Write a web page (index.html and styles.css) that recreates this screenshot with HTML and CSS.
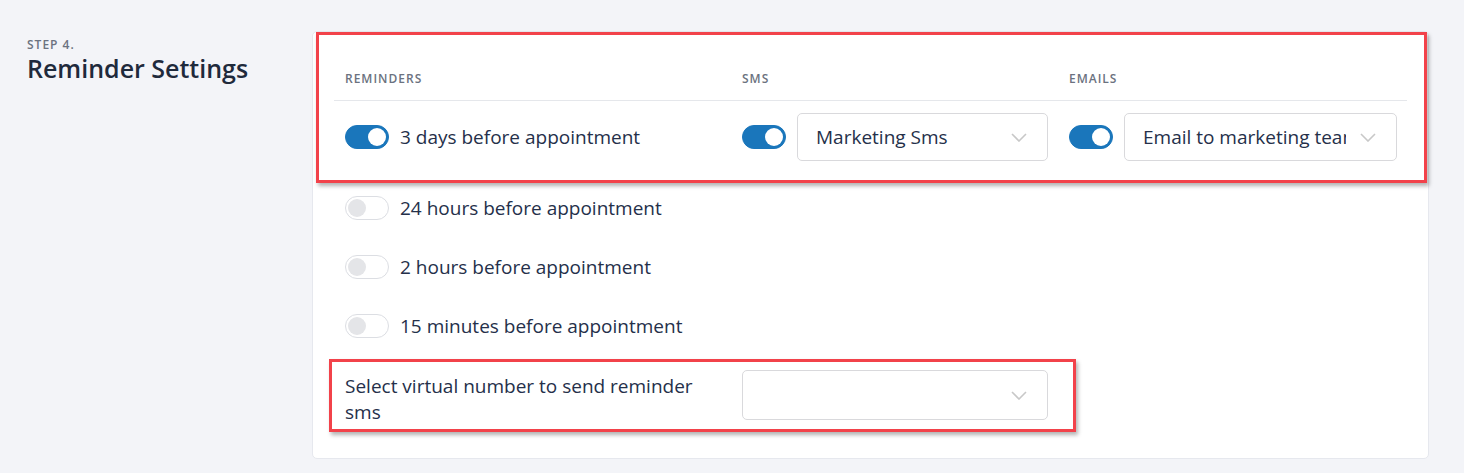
FILE: index.html
```html
<!doctype html>
<html lang="en">
<head>
    <meta charset="UTF-8">
    <title>Reminder Settings</title>
    <link rel="stylesheet" href="styles.css">
</head>
<body>
    <div class="page">
        <div class="step">
            <div class="step-num">STEP 4.</div>
            <h2 class="step-title">Reminder Settings</h2>
        </div>
        <div class="card">
            <div class="marked">
                <div class="grid head">
                    <div class="th">REMINDERS</div>
                    <div class="th">SMS</div>
                    <div class="th">EMAILS</div>
                </div>
                <div class="grid row first">
                    <div class="cell">
                        <span class="toggle on"></span>
                        <span class="label">3 days before appointment</span>
                    </div>
                    <div class="cell">
                        <span class="toggle on"></span>
                        <div class="select sms">
                            <span class="value">Marketing Sms</span>
                            <svg class="chev" width="16" height="9" viewBox="0 0 16 9"><path d="M1 1l7 7 7-7" fill="none" stroke="#c8c8c8" stroke-width="1.6"/></svg>
                        </div>
                    </div>
                    <div class="cell">
                        <span class="toggle on"></span>
                        <div class="select email">
                            <span class="value">Email to marketing team</span>
                            <svg class="chev" width="16" height="9" viewBox="0 0 16 9"><path d="M1 1l7 7 7-7" fill="none" stroke="#c8c8c8" stroke-width="1.6"/></svg>
                        </div>
                    </div>
                </div>
            </div>
            <div class="grid row">
                <div class="cell">
                    <span class="toggle"></span>
                    <span class="label">24 hours before appointment</span>
                </div>
            </div>
            <div class="grid row">
                <div class="cell">
                    <span class="toggle"></span>
                    <span class="label">2 hours before appointment</span>
                </div>
            </div>
            <div class="grid row">
                <div class="cell">
                    <span class="toggle"></span>
                    <span class="label">15 minutes before appointment</span>
                </div>
            </div>
            <div class="grid virtual">
                <div class="cell">
                    <span class="label">Select virtual number to send reminder sms</span>
                </div>
                <div class="cell">
                    <div class="select wide">
                        <span class="value"></span>
                        <svg class="chev" width="16" height="9" viewBox="0 0 16 9"><path d="M1 1l7 7 7-7" fill="none" stroke="#c8c8c8" stroke-width="1.6"/></svg>
                    </div>
                </div>
            </div>
        </div>
    </div>
</body>
</html>
```

FILE: styles.css
```css
body{
    margin: 0;
    background: #f3f4f8;
    font-family: "Open Sans", "Noto Sans", sans-serif;
    color: #25304a;
}
.page{
    display: flex;
    padding: 31px 35px 14px 27px;
}
.step{
    width: 285px;
    flex-shrink: 0;
    padding-top: 6px;
}
.step-num{
    font-size: 12px;
    font-weight: 600;
    letter-spacing: 1px;
    line-height: 16px;
    color: #6b7280;
}
.step-title{
    margin: 0;
    font-size: 25px;
    font-weight: 600;
    line-height: 30px;
    color: #1f2a3c;
}
.card{
    flex: 1;
    background: #fff;
    border: 1px solid #e6e8ee;
    border-radius: 5px;
    padding: 24px 21px 33px 21px;
}
.marked{
    position: relative;
}
.marked::after{
    content: "";
    position: absolute;
    left: -18px;
    right: -20px;
    top: -24px;
    bottom: -10px;
    border: 3px solid #f2424a;
    box-shadow: 2px 3px 4px rgba(0,0,0,.3);
    pointer-events: none;
}
.grid{
    display: grid;
    grid-template-columns: 397px 327px 1fr;
}
.head{
    border-bottom: 1px solid #e5e7eb;
    height: 44px;
    align-items: center;
}
.th{
    padding-left: 11px;
    font-size: 12px;
    font-weight: 600;
    letter-spacing: 1px;
    color: #6b7280;
}
.row{
    height: 59px;
    align-items: center;
}
.row.first{
    height: 72px;
    margin-bottom: 5px;
}
.cell{
    display: flex;
    align-items: center;
    padding-left: 11px;
    padding-right: 10px;
    min-width: 0;
}
.toggle{
    position: relative;
    flex-shrink: 0;
    width: 42px;
    height: 22px;
    border: 1px solid #dcdee3;
    border-radius: 12px;
    background: #fff;
    margin-right: 11px;
}
.toggle::after{
    content: "";
    position: absolute;
    top: 2px;
    left: 2px;
    width: 18px;
    height: 18px;
    border-radius: 50%;
    background: #e4e5e8;
}
.toggle.on{
    background: #1a76bb;
    border-color: #1a76bb;
}
.toggle.on::after{
    left: auto;
    right: 2px;
    background: #fff;
}
.label{
    font-size: 19px;
    line-height: 26px;
}
.select{
    flex: 1;
    min-width: 0;
    height: 46px;
    border: 1px solid #d9d9dc;
    border-radius: 5px;
    display: flex;
    align-items: center;
    padding: 0 20px 0 18px;
    gap: 14px;
}
.value{
    flex: 1;
    min-width: 0;
    overflow: hidden;
    white-space: nowrap;
    font-size: 19px;
}
.chev{
    flex-shrink: 0;
}
.virtual{
    position: relative;
    padding-top: 15px;
    align-items: start;
}
.virtual::after{
    content: "";
    position: absolute;
    left: -5px;
    width: 741px;
    top: 4px;
    height: 67px;
    border: 3px solid #f2424a;
    box-shadow: 2px 3px 4px rgba(0,0,0,.3);
    pointer-events: none;
}
.virtual .cell:first-child{
    padding-top: 3px;
    padding-right: 30px;
}
.select.wide{
    height: 48px;
}
```
